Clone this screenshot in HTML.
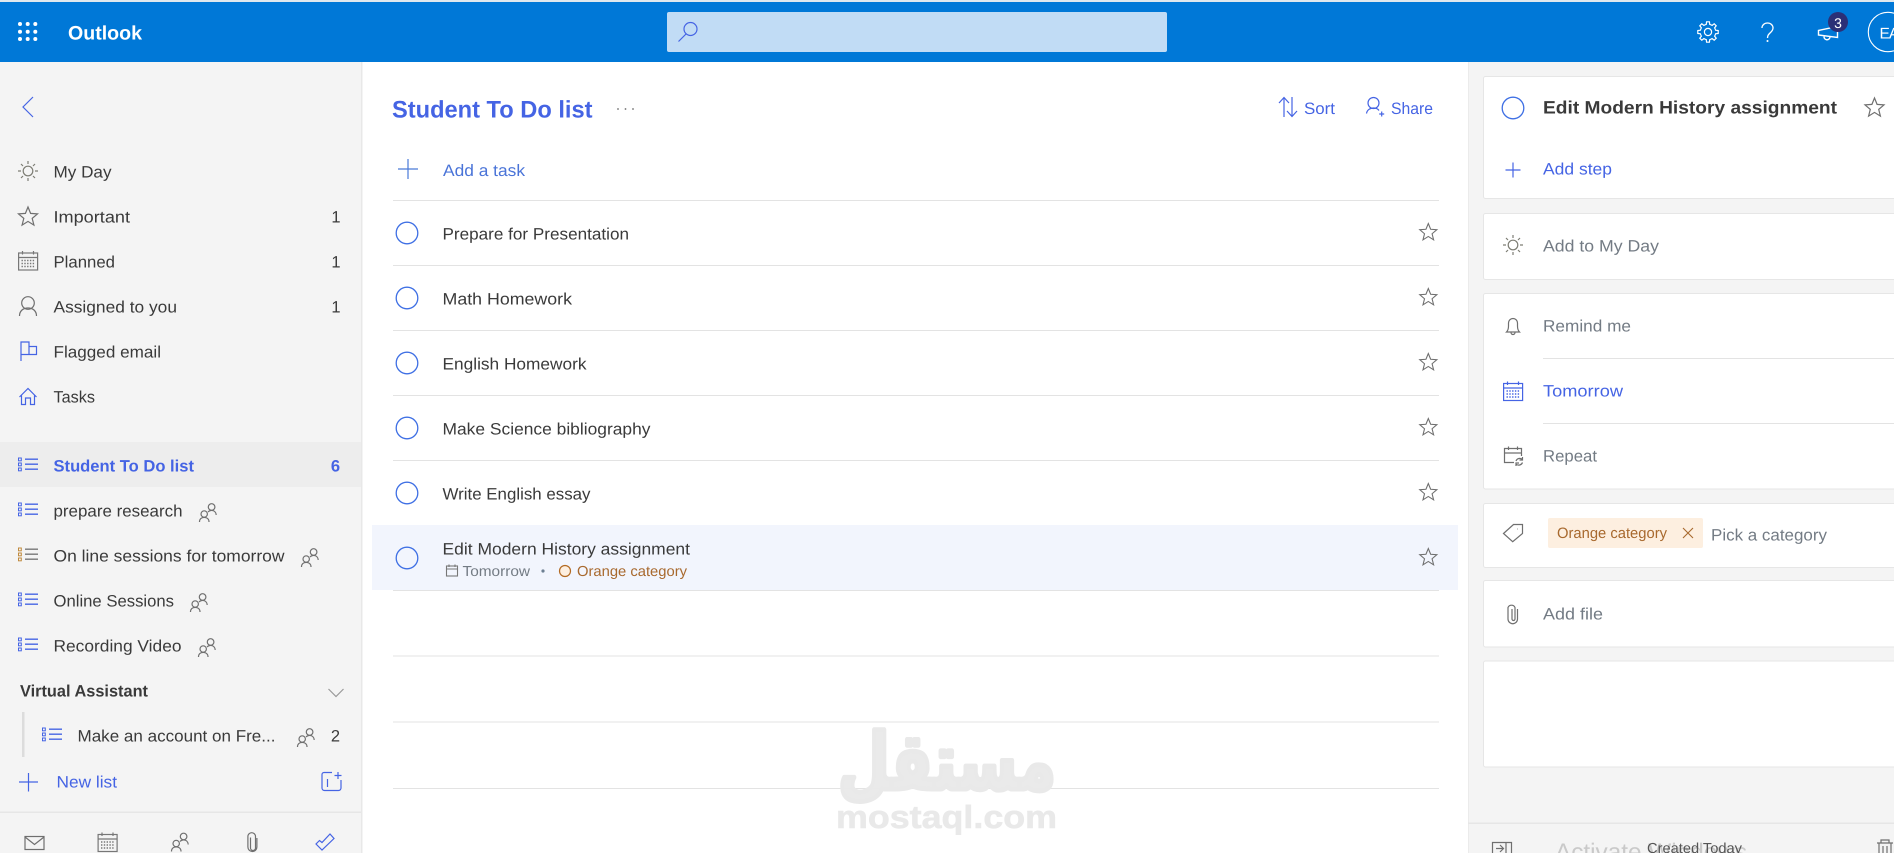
<!DOCTYPE html>
<html lang="en">
<head>
<meta charset="utf-8">
<title>Outlook - To Do</title>
<style>
html,body{margin:0;padding:0;background:#fff;overflow:hidden;width:1894px;height:853px}
svg{display:block}
text{font-family:"Liberation Sans",sans-serif;font-size:16.5px;fill:#3a3a3a;text-rendering:geometricPrecision}
.b{fill:#4564e4}
.g{fill:#737b84}
.s{font-weight:700}
.i{fill:none;stroke:#6f6f6f;stroke-width:1.2}
.ib{fill:none;stroke:#4564e4;stroke-width:1.2}
.l{stroke:#e3e3e3;stroke-width:1}
.card{fill:#fff;stroke:#e6e6e6;stroke-width:1}
</style>
</head>
<body>
<svg width="1894" height="853" viewBox="0 0 1894 853" xmlns="http://www.w3.org/2000/svg">
<defs>
<path id="star" d="M0-10L2.6-3.6 9.5-3.1 4.2 1.4 5.9 8.1 0 4.4-5.9 8.1-4.2 1.4-9.5-3.1-2.6-3.6Z"/>
<g id="ppl" fill="none" stroke="#6f6f6f" stroke-width="1.2">
<circle cx="5.2" cy="11" r="3.2"/><path d="M.5 19c0-3 2-4.6 4.7-4.6S10 16 10 19"/>
<circle cx="12.6" cy="4" r="3.3"/><path d="M9 9c1-1 2.2-1.6 3.6-1.6 2.6 0 4.400 1.800 4.600 4.600"/>
</g>
<g id="list" fill="none">
<rect x=".5" y="-.5" width="2.800" height="2.800" stroke-width="1"/>
<rect x=".5" y="4.500" width="2.800" height="2.800" stroke-width="1"/>
<rect x=".5" y="9.500" width="2.800" height="2.800" stroke-width="1"/>
<path d="M7 .7h13M7 5.700h13M7 10.700h13" stroke-width="1.300"/>
</g>
<g id="cal" fill="none" stroke-width="1.2">
<rect x=".6" y="2" width="19" height="17"/>
<path d="M.6 6.500h19M4.500 0v3.500M15.500 0v3.500" />
<path d="M3.500 9.500h13M3.500 12.500h13M3.500 15.500h13" stroke-dasharray="1.400 1.400" stroke-width="1.400"/>
</g>
<g id="sun" fill="none" stroke-width="1.2">
<circle r="4.800"/>
<path d="M0-10v3M0 7v3M-10 0h3M7 0h3M-7-7l2 2M5 5l2 2M7-7L5-5M-5 5l-2 2"/>
</g>
<path id="tooth" d="M7.200-3L7.600-1.750 10.200-1.430V1.430L7.600 1.750 7.200 3"/>
</defs>

<!-- top bar -->
<rect width="1894" height="62" fill="#0078d7"/>
<rect width="1894" height="2" fill="#dfe8ee"/>
<g fill="#fff">
<circle cx="20" cy="24" r="2"/><circle cx="27.700" cy="24" r="2"/><circle cx="35.300" cy="24" r="2"/>
<circle cx="20" cy="31.700" r="2"/><circle cx="27.700" cy="31.700" r="2"/><circle cx="35.300" cy="31.700" r="2"/>
<circle cx="20" cy="39" r="2"/><circle cx="27.700" cy="39" r="2"/><circle cx="35.300" cy="39" r="2"/>
</g>
<text x="68" y="39.500" textLength="74" lengthAdjust="spacingAndGlyphs" class="s" style="fill:#fff;font-size:19.500px">Outlook</text>
<rect x="667" y="12" width="500" height="40" rx="2" fill="#c1dcf5"/>
<circle cx="690.500" cy="29" r="6.500" class="ib"/><path d="M686 34L678.500 41.500" class="ib"/>
<g fill="none" stroke="#fff" stroke-width="1.2" transform="translate(1708 32)">
<use href="#tooth"/><use href="#tooth" transform="rotate(45)"/><use href="#tooth" transform="rotate(90)"/><use href="#tooth" transform="rotate(135)"/><use href="#tooth" transform="rotate(180)"/><use href="#tooth" transform="rotate(225)"/><use href="#tooth" transform="rotate(270)"/><use href="#tooth" transform="rotate(315)"/>
<circle r="3.600"/>
</g>
<path d="M1762 28c0-3 2.500-5 5.500-5s5.500 2 5.500 5c0 2.500-1.500 3.500-3 5s-2.500 2.500-2.500 5" fill="none" stroke="#fff" stroke-width="1.300"/>
<circle cx="1767.500" cy="41" r="1" fill="#fff"/>
<path d="M1818.500 30.500v4.500l19 2.500v-11zM1824 36.500a3 3 0 0 0 6 .5" fill="none" stroke="#fff" stroke-width="1.400"/>
<circle cx="1838" cy="22" r="10" fill="#2b2f77"/>
<text x="1838" y="28" text-anchor="middle" style="fill:#fff;font-size:14px">3</text>
<circle cx="1888" cy="32" r="19.700" fill="none" stroke="#fff" stroke-width="1.100"/>
<text x="1879.500" y="38.500" style="fill:#fff;font-size:15.500px;letter-spacing:-1px">EA</text>

<!-- sidebar -->
<rect y="62" width="361" height="791" fill="#f4f4f4"/>
<rect x="361" y="62" width="1.500" height="791" fill="#e8e8e8"/>
<path d="M33 97L23 107 33 117" class="ib"/>

<use href="#sun" transform="translate(28 171)" stroke="#7d7d74"/>
<text x="53.500" y="177.500" textLength="58" lengthAdjust="spacingAndGlyphs">My Day</text>
<use href="#star" transform="translate(28 217)" class="i"/>
<text x="53.500" y="222.500" textLength="76.500" lengthAdjust="spacingAndGlyphs">Important</text>
<text x="340.500" y="222.500" text-anchor="end">1</text>
<use href="#cal" transform="translate(18 251)" stroke="#777"/>
<text x="53.500" y="267.500" textLength="61.500" lengthAdjust="spacingAndGlyphs">Planned</text>
<text x="340.500" y="267.500" text-anchor="end">1</text>
<circle cx="28" cy="303" r="6.300" class="i"/><path d="M19.500 316c0-5 3.500-8 8.500-8s8.500 3 8.500 8" class="i" stroke="#7a705f"/>
<text x="53.500" y="312.500" textLength="123.500" lengthAdjust="spacingAndGlyphs">Assigned to you</text>
<text x="340.500" y="312.500" text-anchor="end">1</text>
<path d="M21 361V342H29V354.500H21M29 346.500H36.500V354.500H29" class="ib"/>
<text x="53.500" y="357.500" textLength="107.500" lengthAdjust="spacingAndGlyphs">Flagged email</text>
<path d="M19.500 397L28 388.500 36.500 397M21.500 395.500V404.500H25.500V398H30.500V404.500H34.500V395.500" class="ib"/>
<text x="53.500" y="402.500" textLength="41.500" lengthAdjust="spacingAndGlyphs">Tasks</text>

<rect y="442" width="361" height="45" fill="#ededed"/>
<use href="#list" transform="translate(18 458.500)" stroke="#4564e4"/>
<text x="53.500" y="471.500" textLength="140.500" lengthAdjust="spacingAndGlyphs" class="b s">Student To Do list</text>
<text x="340" y="471.500" text-anchor="end" class="b s">6</text>

<use href="#list" transform="translate(18 503.500)" stroke="#4564e4"/>
<text x="53.500" y="516.500" textLength="129" lengthAdjust="spacingAndGlyphs">prepare research</text>
<use href="#ppl" transform="translate(199 503)"/>

<g transform="translate(18 548.500)" fill="none"><rect x=".5" y="-.5" width="2.800" height="2.800" stroke="#c08a3e"/><rect x=".5" y="4.500" width="2.800" height="2.800" stroke="#c08a3e"/><rect x=".5" y="9.500" width="2.800" height="2.800" stroke="#c08a3e"/><path d="M7 .7h13M7 5.700h13M7 10.700h13" stroke="#777" stroke-width="1.300"/></g>
<text x="53.500" y="561.500" textLength="231" lengthAdjust="spacingAndGlyphs">On line sessions for tomorrow</text>
<use href="#ppl" transform="translate(301 548)"/>

<use href="#list" transform="translate(18 593.500)" stroke="#4564e4"/>
<text x="53.500" y="606.500" textLength="120.500" lengthAdjust="spacingAndGlyphs">Online Sessions</text>
<use href="#ppl" transform="translate(190 593)"/>

<use href="#list" transform="translate(18 638.500)" stroke="#4564e4"/>
<text x="53.500" y="651.500" textLength="128" lengthAdjust="spacingAndGlyphs">Recording Video</text>
<use href="#ppl" transform="translate(198 638)"/>

<text x="20" y="696.500" textLength="128" lengthAdjust="spacingAndGlyphs" class="s">Virtual Assistant</text>
<path d="M328.500 689L336 696.500 343.500 689" class="i" style="stroke:#999"/>
<rect x="22" y="712" width="2.500" height="45" fill="#dcdcdc"/>
<use href="#list" transform="translate(42 728.500)" stroke="#4564e4"/>
<text x="77.500" y="741.500" textLength="198" lengthAdjust="spacingAndGlyphs">Make an account on Fre...</text>
<use href="#ppl" transform="translate(297 728)"/>
<text x="340" y="741.500" text-anchor="end">2</text>

<path d="M19 782H38M28.500 773V791.500" class="ib"/>
<text x="56.500" y="787.500" textLength="60.500" lengthAdjust="spacingAndGlyphs" class="b">New list</text>
<path d="M332 772.500H324a2 2 0 0 0-2 2V788a2.500 2.500 0 0 0 2.500 2.500H338.500a2.500 2.500 0 0 0 2.500-2.500V780M327.500 779V787M338 772V779M334.500 775.500H341.500" class="ib"/>
<rect y="811.500" width="361" height="1.500" fill="#e6e6e6"/>
<g>
<rect x="25" y="836.500" width="19" height="13" class="i"/><path d="M25 837L34.500 844.500 44 837" class="i"/>
<use href="#cal" transform="translate(97.500 832.500)" stroke="#777"/>
<use href="#ppl" transform="translate(171 832.500)"/>
<path d="M250.500 837.500V848a2.500 2.500 0 0 0 5 0V836.500a3.800 3.800 0 0 0-7.600 0V847a4.500 4.500 0 0 0 9 0V838" class="i"/>
<path d="M316 844L322 850 334 838.500 330 834 322 842.500 319.500 840.500Z" class="ib"/>
</g>

<!-- main list -->
<text x="392" y="117.500" textLength="200.500" lengthAdjust="spacingAndGlyphs" class="b s" style="font-size:24px">Student To Do list</text>
<g fill="#6f6f6f"><circle cx="618" cy="109" r=".9"/><circle cx="625.500" cy="109" r=".9"/><circle cx="633" cy="109" r=".9"/></g>
<path d="M1284 117V98M1279 103L1284 97.500 1289 103M1292 97V116.500M1287 111L1292 116.500 1297 111" class="ib"/>
<text x="1304" y="114" textLength="31" lengthAdjust="spacingAndGlyphs" class="b">Sort</text>
<circle cx="1373.500" cy="103" r="5.500" class="ib"/><path d="M1366.500 113.500c.5-3.500 3.500-5.500 7-5.500 2.500 0 4.500 1 5.500 2.500M1381.700 111.500V116.500M1379.200 114H1384.200" class="ib"/>
<text x="1391" y="114" textLength="42" lengthAdjust="spacingAndGlyphs" class="b">Share</text>

<path d="M398 169H418M408 159V179" class="ib" style="stroke:#4a7ad8"/>
<text x="443" y="176" textLength="82" lengthAdjust="spacingAndGlyphs" style="fill:#4a74d8">Add a task</text>
<path d="M393 200.500H1439M393 265.500H1439M393 330.500H1439M393 395.500H1439M393 460.500H1439" class="l"/>

<rect x="372" y="525" width="1086" height="65" fill="#f2f5fd"/>
<path d="M393 590.500H1439M393 656H1439M393 722H1439M393 788.500H1439" class="l"/>

<g fill="none" stroke="#3e6fe4" stroke-width="1.300">
<circle cx="407" cy="233" r="10.800"/><circle cx="407" cy="298" r="10.800"/><circle cx="407" cy="363" r="10.800"/><circle cx="407" cy="428" r="10.800"/><circle cx="407" cy="493" r="10.800"/><circle cx="407" cy="558" r="10.800"/>
</g>
<text x="442.500" y="239.500" textLength="186.500" lengthAdjust="spacingAndGlyphs">Prepare for Presentation</text>
<text x="442.500" y="304.500" textLength="129.500" lengthAdjust="spacingAndGlyphs">Math Homework</text>
<text x="442.500" y="369.500" textLength="144" lengthAdjust="spacingAndGlyphs">English Homework</text>
<text x="442.500" y="434.500" textLength="208" lengthAdjust="spacingAndGlyphs">Make Science bibliography</text>
<text x="442.500" y="499.500" textLength="148" lengthAdjust="spacingAndGlyphs">Write English essay</text>
<text x="442.500" y="554.500" textLength="247.500" lengthAdjust="spacingAndGlyphs">Edit Modern History assignment</text>
<rect x="446.500" y="566" width="11" height="10" fill="none" stroke="#777" stroke-width="1.100"/><path d="M446.500 569H457.500M449 564.500V567M455 564.500V567" stroke="#777" stroke-width="1.100"/>
<text x="462.500" y="576" textLength="67.500" lengthAdjust="spacingAndGlyphs" class="g" style="font-size:14.500px">Tomorrow</text>
<circle cx="543" cy="571" r="1.600" fill="#6d7f92"/>
<circle cx="565" cy="571" r="5.500" fill="#fdefe0" stroke="#b36a22" stroke-width="1.200"/>
<text x="577" y="576" textLength="110" lengthAdjust="spacingAndGlyphs" style="fill:#a8692e;font-size:14.500px">Orange category</text>
<g class="i">
<use href="#star" transform="translate(1428.300 232.500) scale(.9)"/><use href="#star" transform="translate(1428.300 297.500) scale(.9)"/><use href="#star" transform="translate(1428.300 362.500) scale(.9)"/><use href="#star" transform="translate(1428.300 427.500) scale(.9)"/><use href="#star" transform="translate(1428.300 492.500) scale(.9)"/><use href="#star" transform="translate(1428.300 557.500) scale(.9)"/>
</g>

<!-- watermark -->
<text x="947" y="789" text-anchor="middle" textLength="218" lengthAdjust="spacingAndGlyphs" direction="rtl" style="font-family:'DejaVu Sans',sans-serif;font-weight:700;font-size:78px;fill:#e9e9e9;fill-opacity:.95;stroke:#e9e9e9;stroke-width:5;stroke-linejoin:round">مستقل</text>
<text x="836" y="828" textLength="221" lengthAdjust="spacingAndGlyphs" class="s" style="font-size:32px;fill:#e9e9e9;stroke:#e9e9e9;stroke-width:.6">mostaql.com</text>

<!-- right pane -->
<rect x="1468" y="62" width="426" height="791" fill="#f4f4f4"/>
<rect x="1468" y="62" width="1" height="791" fill="#ebebeb"/>
<rect x="1483.500" y="76.500" width="420" height="122" rx="2" class="card"/>
<rect x="1483.500" y="213.500" width="420" height="66" rx="2" class="card"/>
<rect x="1483.500" y="293.500" width="420" height="195.500" rx="2" class="card"/>
<rect x="1483.500" y="503.500" width="420" height="64" rx="2" class="card"/>
<rect x="1483.500" y="580.500" width="420" height="66.500" rx="2" class="card"/>
<rect x="1483.500" y="661" width="420" height="106" rx="2" class="card"/>

<circle cx="1513" cy="108" r="10.800" fill="none" stroke="#3e6fe4" stroke-width="1.300"/>
<text x="1543" y="113.500" textLength="294" lengthAdjust="spacingAndGlyphs" class="s" style="font-size:18px">Edit Modern History assignment</text>
<use href="#star" transform="translate(1874.500 108)" class="i"/>
<path d="M1505.500 170H1520.500M1513 162.500V177.500" class="ib"/>
<text x="1543" y="174.500" textLength="69" lengthAdjust="spacingAndGlyphs" class="b">Add step</text>
<use href="#sun" transform="translate(1513 245)" stroke="#7d7d74"/>
<text x="1543" y="251.500" textLength="116" lengthAdjust="spacingAndGlyphs" class="g">Add to My Day</text>

<path d="M1506.500 332c1.500-1.500 2-3 2-6v-3a4.500 4.500 0 0 1 9 0v3c0 3 .5 4.500 2 6zM1511 332.500a2 2 0 0 0 4 0" class="i"/>
<text x="1543" y="331.500" textLength="88" lengthAdjust="spacingAndGlyphs" class="g">Remind me</text>
<path d="M1543 358.500H1894M1543 423.500H1894" class="l"/>
<use href="#cal" transform="translate(1503 381.500)" stroke="#4564e4"/>
<text x="1543" y="396.500" textLength="80" lengthAdjust="spacingAndGlyphs" class="b">Tomorrow</text>
<path d="M1514 462.500H1504.500V448.500H1521.500V456M1504.500 453H1521.500M1508.500 446.500V450M1517.500 446.500V450" class="i"/>
<path d="M1516 461a4 4 0 0 1 6.500-1.500M1522.500 462.500a4 4 0 0 1-6.500 1.500M1522.500 457v3h-3M1516 466v-3h3" class="i"/>
<text x="1543" y="461.500" textLength="54" lengthAdjust="spacingAndGlyphs" class="g">Repeat</text>

<path d="M1503.500 533.500L1513.500 524.500H1522.500V533.500L1512.700 541.700ZM1517.500 529h.5" class="i"/>
<rect x="1548" y="518" width="155" height="30" rx="2" fill="#fdefe0"/>
<text x="1557" y="538" textLength="110" lengthAdjust="spacingAndGlyphs" style="fill:#a8692e;font-size:15px">Orange category</text>
<path d="M1683 528L1693 538M1693 528L1683 538" fill="none" stroke="#a8692e" stroke-width="1.100"/>
<text x="1711" y="540.500" textLength="116" lengthAdjust="spacingAndGlyphs" class="g">Pick a category</text>

<path d="M1512 609V619a1.500 1.500 0 0 0 3 0V607.500a3.800 3.800 0 0 0-7 0V619a4.500 4.500 0 0 0 9.500 0V609" class="i"/>
<text x="1543" y="619.500" textLength="60" lengthAdjust="spacingAndGlyphs" class="g">Add file</text>

<rect x="1468" y="822.500" width="426" height="1.500" fill="#e6e6e6"/>
<path d="M1492.500 853V842.500H1511.500V853M1506 842.500V853M1496 848.500H1503M1500 845L1503.500 848.500 1500 852" class="i"/>
<text x="1555" y="860" textLength="192" lengthAdjust="spacingAndGlyphs" style="font-size:24px;fill:#c9c9c9">Activate Windows</text>
<text x="1647" y="853" textLength="95" lengthAdjust="spacingAndGlyphs" style="font-size:14.500px;fill:#555">Created Today</text>
<path d="M1877 843H1893M1881 843V840H1889V843M1879 843.500V853M1891 843.500V853M1883 846V853M1887 846V853" class="i"/>
</svg>
</body>
</html>
